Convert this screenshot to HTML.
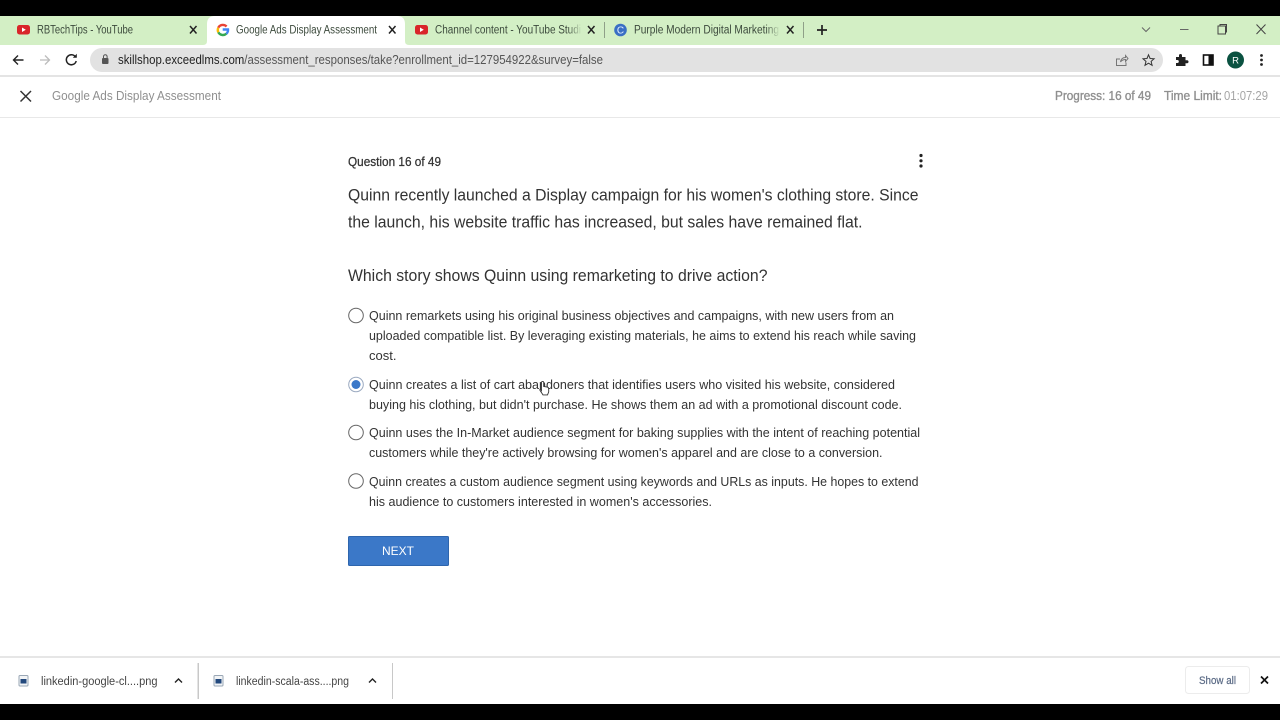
<!DOCTYPE html>
<html><head><meta charset="utf-8"><title>Google Ads Display Assessment</title>
<style>
html,body{margin:0;padding:0;width:1280px;height:720px;overflow:hidden;background:#fff}
svg{display:block;font-family:"Liberation Sans",sans-serif}
.t{font-size:11.5px;fill:#3c4a3c}
.o{font-size:13px;fill:#333}
.h{font-size:16.5px;fill:#333}
.g{font-size:12.5px;fill:#8f8f8f}
.d{font-size:11.5px;fill:#444}
</style></head><body>
<svg width="1280" height="720" viewBox="0 0 1280 720" xmlns="http://www.w3.org/2000/svg">
<defs>
<linearGradient id="f" x1="0" x2="1" y1="0" y2="0"><stop offset="0" stop-color="#d3efc5" stop-opacity="0"/><stop offset="1" stop-color="#d3efc5"/></linearGradient>
</defs>
<rect width="1280" height="720" fill="#fff"/>
<rect width="1280" height="16" fill="#000"/>
<rect y="16" width="1280" height="29" fill="#d3efc5"/>
<path d="M203 45q4 0 4-4V24q0-8 8-8h182q8 0 8 8v17q0 4 4 4z" fill="#fff"/>
<rect y="45" width="1280" height="30" fill="#fff"/>
<rect y="75" width="1280" height="2" fill="#e4e4e4"/>
<rect y="117" width="1280" height="1" fill="#e8e8e8"/>

<!-- tabs -->
<rect x="17" y="25" width="13" height="9.500" rx="2.500" fill="#d9252a"/><path d="M22 27.500v4.500l3.800-2.200z" fill="#fff"/>
<text class="t" x="37" y="33.500" textLength="96" lengthAdjust="spacingAndGlyphs">RBTechTips - YouTube</text>
<path d="M190 26l6.500 7.500M196.500 26l-6.500 7.500" stroke="#222" stroke-width="1.500"/>

<g fill="none" stroke-width="2.400">
<path d="M226.600 26.500a5.200 5.200 0 0 0-8.300 1.200" stroke="#e94335"/>
<path d="M218.300 27.700a5.400 5.400 0 0 0 0 4.600" stroke="#fbbc05"/>
<path d="M218.300 32.300a5.300 5.300 0 0 0 8.100 1.400" stroke="#34a853"/>
<path d="M226.400 33.700a5 5 0 0 0 1.600-4.200h-5.300" stroke="#4285f4"/>
</g>
<text class="t" x="236" y="33.500" textLength="141" lengthAdjust="spacingAndGlyphs">Google Ads Display Assessment</text>
<path d="M389 26l6.500 7.500M395.500 26l-6.500 7.500" stroke="#222" stroke-width="1.500"/>

<rect x="415" y="25" width="13" height="9.500" rx="2.500" fill="#d9252a"/><path d="M420 27.500v4.500l3.800-2.200z" fill="#fff"/>
<text class="t" x="435" y="33.500" textLength="146" lengthAdjust="spacingAndGlyphs">Channel content - YouTube Studi</text>
<rect x="568" y="22" width="14" height="16" fill="url(#f)"/>
<path d="M588 26l6.500 7.500M594.500 26l-6.500 7.500" stroke="#222" stroke-width="1.500"/>
<rect x="604" y="22" width="1" height="16" fill="#8fa088"/>

<circle cx="620.500" cy="30" r="6.300" fill="#3a6fc4"/>
<text x="620.500" y="33.500" font-size="10px" fill="#e6f0ff" text-anchor="middle">C</text>
<text class="t" x="634" y="33.500" textLength="145" lengthAdjust="spacingAndGlyphs">Purple Modern Digital Marketing</text>
<rect x="766" y="22" width="14" height="16" fill="url(#f)"/>
<path d="M787 26l6.500 7.500M793.500 26l-6.500 7.500" stroke="#222" stroke-width="1.500"/>
<rect x="803" y="22" width="1" height="16" fill="#8fa088"/>
<path d="M817 30h10M822 25v10" stroke="#222" stroke-width="1.700"/>

<!-- window controls -->
<path d="M1142 27.500l4 4 4-4" fill="none" stroke="#666" stroke-width="1"/>
<path d="M1180 29.500h8.500" stroke="#666" stroke-width="1"/>
<rect x="1218" y="26" width="7.500" height="8" fill="none" stroke="#444" stroke-width="1"/><path d="M1220 26v-1.500h6.500v7.500h-1" fill="none" stroke="#444" stroke-width="1"/>
<path d="M1256.500 24.500l9 9.500M1265.500 24.500l-9 9.500" stroke="#444" stroke-width="1"/>

<!-- toolbar -->
<path d="M23.500 60H13.500M18 55.500l-4.500 4.500 4.500 4.500" fill="none" stroke="#222" stroke-width="1.400"/>
<path d="M40 60h9.500M45 55.500l4.500 4.500-4.500 4.500" fill="none" stroke="#bcbcbc" stroke-width="1.300"/>
<path d="M75.500 57a5 5 0 1 0 .7 4" fill="none" stroke="#222" stroke-width="1.500"/><path d="M72.800 57.800h4v-4z" fill="#222"/>
<rect x="90" y="48" width="1073" height="24" rx="12" fill="#e2e2e2"/>
<rect x="102" y="58" width="6.500" height="6" rx="1" fill="#555"/><path d="M103.500 58v-1.500a1.800 1.800 0 0 1 3.600 0V58" fill="none" stroke="#555"/>
<text x="118" y="64" font-size="12.500px" fill="#222" textLength="485" lengthAdjust="spacingAndGlyphs">skillshop.exceedlms.com<tspan fill="#555">/assessment_responses/take?enrollment_id=127954922&amp;survey=false</tspan></text>
<path d="M1120 59h-3.500v6.500h9.500v-3M1120.500 62c.5-3 2.500-4.500 5-4.500v-2l2.500 3-2.500 3v-2c-2 0-3.500.5-5 2.500z" fill="none" stroke="#777" stroke-width="1"/>
<path d="M1148.500 54.800l1.600 3.700 4 .3-3 2.600 1 3.900-3.600-2.100-3.500 2.100 1-3.900-3-2.600 4-.3z" fill="none" stroke="#333" stroke-width="1"/>
<path d="M1176 57h3v-1.500a1.500 1.500 0 0 1 3 0V57h3.500v3.300H1187a1.500 1.500 0 0 1 0 3h-1.500V66H1176v-3h1.300a1.500 1.500 0 0 0 0-3H1176z" fill="#222"/>
<rect x="1203.500" y="55" width="9.500" height="10" fill="none" stroke="#111" stroke-width="1.600"/><rect x="1208.500" y="55" width="4.500" height="10" fill="#111"/>
<circle cx="1235.500" cy="60" r="8.500" fill="#0b5241"/>
<text x="1235.500" y="63.500" font-size="9.500px" fill="#fff" text-anchor="middle">R</text>
<circle cx="1261.500" cy="55.500" r="1.400" fill="#222"/><circle cx="1261.500" cy="60" r="1.400" fill="#222"/><circle cx="1261.500" cy="64.500" r="1.400" fill="#222"/>

<!-- page header -->
<path d="M20.500 91l10.500 10.500M31 91l-10.500 10.500" stroke="#333" stroke-width="1.500"/>
<text class="g" x="52" y="100" textLength="169" lengthAdjust="spacingAndGlyphs">Google Ads Display Assessment</text>
<text class="g" x="1055" y="100" textLength="96" lengthAdjust="spacingAndGlyphs" stroke="#8f8f8f" stroke-width=".35">Progress: 16 of 49</text>
<text class="g" x="1164" y="100" textLength="58" lengthAdjust="spacingAndGlyphs" stroke="#8f8f8f" stroke-width=".35">Time Limit:</text>
<text class="g" x="1224" y="100" textLength="44" lengthAdjust="spacingAndGlyphs" style="fill:#a5a5a5">01:07:29</text>

<!-- question -->
<text x="348" y="166" font-size="12.500px" fill="#333" stroke="#333" stroke-width=".25" textLength="93" lengthAdjust="spacingAndGlyphs">Question 16 of 49</text>
<circle cx="921" cy="155.500" r="1.600" fill="#222"/><circle cx="921" cy="160.800" r="1.600" fill="#222"/><circle cx="921" cy="166" r="1.600" fill="#222"/>
<text class="h" x="348" y="200.500" textLength="570.500" lengthAdjust="spacingAndGlyphs">Quinn recently launched a Display campaign for his women's clothing store. Since</text>
<text class="h" x="348" y="227.500" textLength="514.500" lengthAdjust="spacingAndGlyphs">the launch, his website traffic has increased, but sales have remained flat.</text>
<text class="h" x="348" y="281" textLength="419.500" lengthAdjust="spacingAndGlyphs">Which story shows Quinn using remarketing to drive action?</text>

<!-- radios -->
<circle cx="356" cy="315.500" r="7.300" fill="#fff" stroke="#666" stroke-width="1"/>
<circle cx="356" cy="384.500" r="7.300" fill="#fff" stroke="#9aa9c0" stroke-width="1"/><circle cx="356" cy="384.500" r="4.500" fill="#3a78c9"/>
<circle cx="356" cy="432.500" r="7.300" fill="#fff" stroke="#666" stroke-width="1"/>
<circle cx="356" cy="481" r="7.300" fill="#fff" stroke="#666" stroke-width="1"/>

<text class="o" x="369" y="320" textLength="525" lengthAdjust="spacingAndGlyphs">Quinn remarkets using his original business objectives and campaigns, with new users from an</text>
<text class="o" x="369" y="340" textLength="547" lengthAdjust="spacingAndGlyphs">uploaded compatible list. By leveraging existing materials, he aims to extend his reach while saving</text>
<text class="o" x="369" y="360" textLength="27.500" lengthAdjust="spacingAndGlyphs">cost.</text>
<text class="o" x="369" y="389" textLength="526" lengthAdjust="spacingAndGlyphs">Quinn creates a list of cart abandoners that identifies users who visited his website, considered</text>
<text class="o" x="369" y="409" textLength="533" lengthAdjust="spacingAndGlyphs">buying his clothing, but didn't purchase. He shows them an ad with a promotional discount code.</text>
<text class="o" x="369" y="437" textLength="551" lengthAdjust="spacingAndGlyphs">Quinn uses the In-Market audience segment for baking supplies with the intent of reaching potential</text>
<text class="o" x="369" y="457" textLength="513.500" lengthAdjust="spacingAndGlyphs">customers while they're actively browsing for women's apparel and are close to a conversion.</text>
<text class="o" x="369" y="486" textLength="549.500" lengthAdjust="spacingAndGlyphs">Quinn creates a custom audience segment using keywords and URLs as inputs. He hopes to extend</text>
<text class="o" x="369" y="506" textLength="343" lengthAdjust="spacingAndGlyphs">his audience to customers interested in women's accessories.</text>

<!-- cursor -->
<path d="M541.500 390.500v-8a1.100 1.100 0 0 1 2.200 0v4l3.500.6q1.500.3 1.500 1.800v3l-1.200 3h-4.500l-3-4.500q-.6-1 .5-1.200z" fill="#fff" stroke="#333" stroke-width=".9"/>

<!-- next -->
<rect x="348.500" y="536.500" width="100" height="29" rx="1" fill="#3b78c8" stroke="#2e65ad"/>
<text x="398" y="555" font-size="12px" fill="#fff" text-anchor="middle">NEXT</text>

<!-- download bar -->
<rect y="656" width="1280" height="2" fill="#e6e6e6"/>
<rect y="704" width="1280" height="16" fill="#000"/>

<rect x="19" y="675.500" width="9" height="10.500" rx="1" fill="#f2f4f6" stroke="#9aa7b5"/><rect x="20.500" y="679" width="6" height="4.500" fill="#23497d"/>
<text class="d" x="41" y="685" textLength="116.500" lengthAdjust="spacingAndGlyphs">linkedin-google-cl....png</text>
<path d="M175 682.500l3.500-3.500 3.500 3.500" fill="none" stroke="#222" stroke-width="1.400"/>
<rect x="197.500" y="663" width="1.500" height="36" fill="#c8c8c8"/>

<rect x="214" y="675.500" width="9" height="10.500" rx="1" fill="#f2f4f6" stroke="#9aa7b5"/><rect x="215.500" y="679" width="6" height="4.500" fill="#23497d"/>
<text class="d" x="236" y="685" textLength="113" lengthAdjust="spacingAndGlyphs">linkedin-scala-ass....png</text>
<path d="M369 682.500l3.500-3.500 3.500 3.500" fill="none" stroke="#222" stroke-width="1.400"/>
<rect x="392" y="663" width="1" height="36" fill="#c8c8c8"/>

<rect x="1185.500" y="666.500" width="64" height="27" rx="3" fill="#fff" stroke="#ececec"/>
<text x="1199" y="684" font-size="11px" fill="#5a6a85" stroke="#5a6a85" stroke-width=".2" textLength="37" lengthAdjust="spacingAndGlyphs">Show all</text>
<path d="M1261 676.500l7 7M1268 676.500l-7 7" stroke="#111" stroke-width="1.700"/>
</svg>
</body></html>
